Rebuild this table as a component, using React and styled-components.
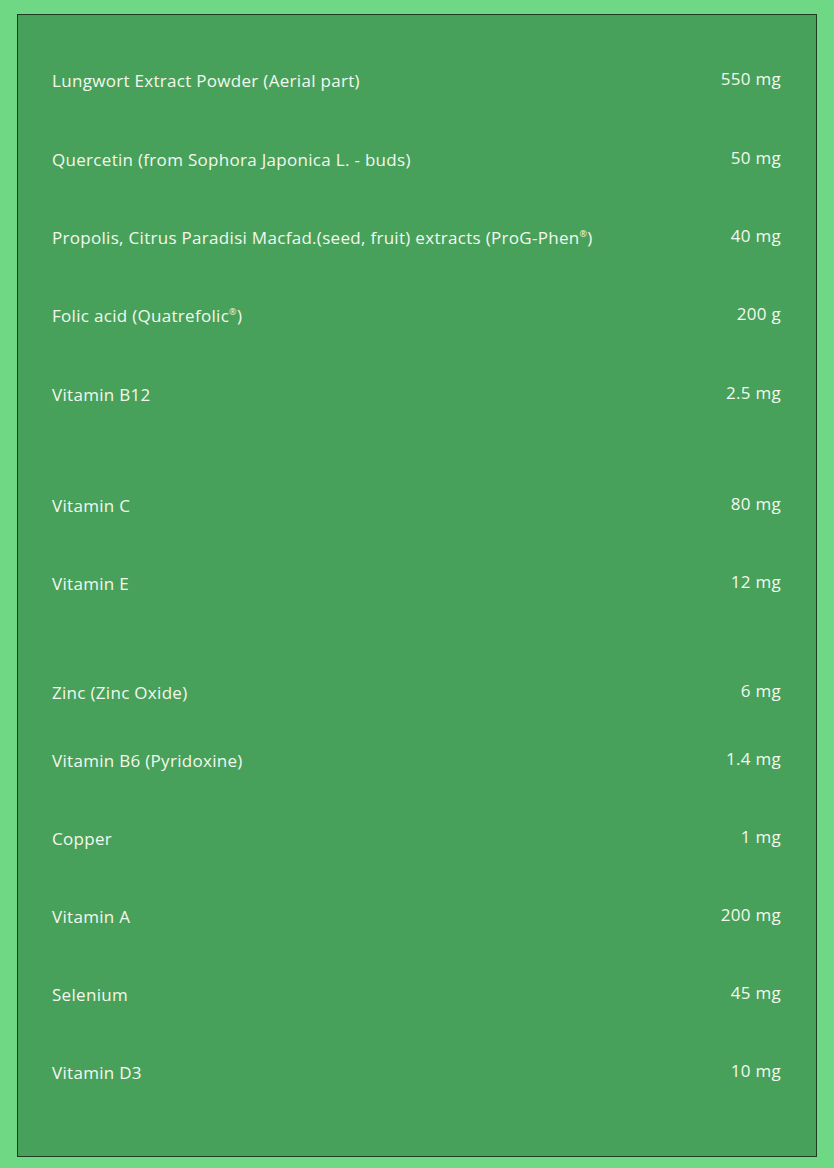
import styled, { createGlobalStyle } from "styled-components";

const GlobalStyle = createGlobalStyle`
  html, body {
    margin: 0;
    padding: 0;
    background: #6fd885;
  }
  body {
    font-family: "Open Sans", "Noto Sans", sans-serif;
  }
`;

const Page = styled.div`
  padding: 14px 17px 10px 17px;
  min-height: 1168px;
  box-sizing: border-box;
`;

const Panel = styled.div`
  width: 800px;
  height: 1143px;
  box-sizing: border-box;
  background: #48a15a;
  border: 1px solid #1f3a22;
  padding: 56px 35px 0 34px;
`;

const Row = styled.div`
  display: flex;
  justify-content: space-between;
  align-items: flex-start;
  height: ${(p) => p.$h}px;
  color: #f3f8ee;
  font-size: 17px;
  line-height: 20px;
  letter-spacing: 0.3px;
`;

const Name = styled.span``;

const Amount = styled.span`
  margin-top: -2px;
`;

const Reg = styled.sup`
  font-size: 9px;
  line-height: 0;
  vertical-align: 7px;
`;

const rows = [
  ["Lungwort Extract Powder (Aerial part)", "550 mg", 79],
  ["Quercetin (from Sophora Japonica L. - buds)", "50 mg", 78],
  ["Propolis, Citrus Paradisi Macfad.(seed, fruit) extracts (ProG-Phen®)", "40 mg", 78],
  ["Folic acid (Quatrefolic®)", "200 g", 79],
  ["Vitamin B12", "2.5 mg", 111],
  ["Vitamin C", "80 mg", 78],
  ["Vitamin E", "12 mg", 109],
  ["Zinc (Zinc Oxide)", "6 mg", 68],
  ["Vitamin B6 (Pyridoxine)", "1.4 mg", 78],
  ["Copper", "1 mg", 78],
  ["Vitamin A", "200 mg", 78],
  ["Selenium", "45 mg", 78],
  ["Vitamin D3", "10 mg", 40],
];

function renderName(text) {
  const parts = text.split("®");
  return parts.map((part, i) => (
    <span key={i}>
      {part}
      {i < parts.length - 1 && <Reg>®</Reg>}
    </span>
  ));
}

export default function App() {
  return (
    <>
      <GlobalStyle />
      <Page>
        <Panel>
          {rows.map(([name, amount, h]) => (
            <Row key={name} $h={h}>
              <Name>{renderName(name)}</Name>
              <Amount>{amount}</Amount>
            </Row>
          ))}
        </Panel>
      </Page>
    </>
  );
}
